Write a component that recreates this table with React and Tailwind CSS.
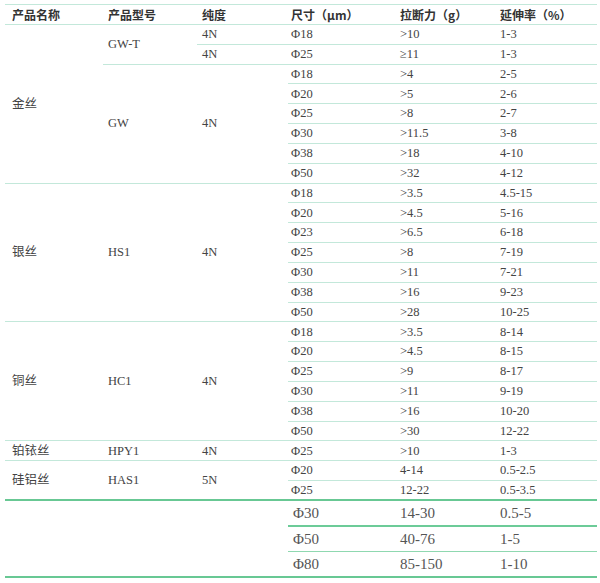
import React from 'react';

const serif = { fontFamily: '"Liberation Serif", "Noto Sans CJK SC", serif' };

const sections = [
  {
    name: '金丝',
    groups: [
      { model: 'GW-T', rows: [['4N', 'Φ18', '>10', '1-3'], ['4N', 'Φ25', '≥11', '1-3']], perRowPurity: true },
      {
        model: 'GW',
        purity: '4N',
        rows: [
          ['Φ18', '>4', '2-5'],
          ['Φ20', '>5', '2-6'],
          ['Φ25', '>8', '2-7'],
          ['Φ30', '>11.5', '3-8'],
          ['Φ38', '>18', '4-10'],
          ['Φ50', '>32', '4-12'],
        ],
      },
    ],
  },
  {
    name: '银丝',
    groups: [
      {
        model: 'HS1',
        purity: '4N',
        rows: [
          ['Φ18', '>3.5', '4.5-15'],
          ['Φ20', '>4.5', '5-16'],
          ['Φ23', '>6.5', '6-18'],
          ['Φ25', '>8', '7-19'],
          ['Φ30', '>11', '7-21'],
          ['Φ38', '>16', '9-23'],
          ['Φ50', '>28', '10-25'],
        ],
      },
    ],
  },
  {
    name: '铜丝',
    groups: [
      {
        model: 'HC1',
        purity: '4N',
        rows: [
          ['Φ18', '>3.5', '8-14'],
          ['Φ20', '>4.5', '8-15'],
          ['Φ25', '>9', '8-17'],
          ['Φ30', '>11', '9-19'],
          ['Φ38', '>16', '10-20'],
          ['Φ50', '>30', '12-22'],
        ],
      },
    ],
  },
  {
    name: '铂铱丝',
    groups: [{ model: 'HPY1', purity: '4N', rows: [['Φ25', '>10', '1-3']] }],
  },
  {
    name: '硅铝丝',
    groups: [
      {
        model: 'HAS1',
        purity: '5N',
        rows: [
          ['Φ20', '4-14', '0.5-2.5'],
          ['Φ25', '12-22', '0.5-3.5'],
        ],
      },
    ],
    last: true,
  },
];

const extra = [
  ['Φ30', '14-30', '0.5-5'],
  ['Φ50', '40-76', '1-5'],
  ['Φ80', '85-150', '1-10'],
];

const cell = 'align-middle pl-[6px] border-b border-[#c3e8da] whitespace-nowrap';

export default function App() {
  const body = [];
  sections.forEach((sec) => {
    const total = sec.groups.reduce((n, g) => n + g.rows.length, 0);
    const secBorder = sec.last ? 'border-b-2 border-[#68c894]' : 'border-b border-[#c3e8da]';
    let first = true;
    sec.groups.forEach((g, gi) => {
      const lastGroup = gi === sec.groups.length - 1;
      g.rows.forEach((r, ri) => {
        const lastRow = lastGroup && ri === g.rows.length - 1;
        const rowBorder = lastRow ? secBorder : 'border-b border-[#c3e8da]';
        const vals = g.perRowPurity ? r.slice(1) : r;
        body.push(
          <tr key={`${sec.name}-${gi}-${ri}`} className="h-[19.84px]">
            {first && (
              <td rowSpan={total} className={`align-middle pl-[7px] whitespace-nowrap ${secBorder}`}>
                {sec.name}
              </td>
            )}
            {ri === 0 && (
              <td rowSpan={g.rows.length} className={`align-middle pl-[5px] whitespace-nowrap ${lastGroup ? secBorder : 'border-b border-[#c3e8da]'}`}>
                {g.model}
              </td>
            )}
            {g.perRowPurity ? (
              <td className={`align-middle pl-[5px] ${rowBorder}`}>{r[0]}</td>
            ) : (
              ri === 0 && (
                <td rowSpan={g.rows.length} className={`align-middle pl-[5px] ${lastGroup ? secBorder : 'border-b border-[#c3e8da]'}`}>
                  {g.purity}
                </td>
              )
            )}
            <td className={`align-middle pl-[3px] ${rowBorder}`}>{vals[0]}</td>
            <td className={`align-middle pl-[5px] ${rowBorder}`}>{vals[1]}</td>
            <td className={`align-middle pl-[5px] ${rowBorder}`}>{vals[2]}</td>
          </tr>
        );
        first = false;
      });
    });
  });

  return (
    <div className="w-[600px] h-[583px] bg-white pt-[4px] pl-[5px]" style={serif}>
      <table className="w-[592px] border-collapse table-fixed text-[12.5px] text-[#444] leading-none">
        <colgroup>
          <col className="w-[98px]" />
          <col className="w-[94px]" />
          <col className="w-[91px]" />
          <col className="w-[107px]" />
          <col className="w-[100px]" />
          <col className="w-[102px]" />
        </colgroup>
        <thead>
          <tr className="h-[20px] border-t border-[#c3e8da] border-b border-[#b6e2d0] text-left font-bold text-[#333] text-[12px]" style={{ fontFamily: '"Noto Sans CJK SC", "Liberation Serif", sans-serif' }}>
            <th className="pl-[7px] font-bold">产品名称</th>
            <th className="pl-[5px] font-bold">产品型号</th>
            <th className="pl-[5px] font-bold">纯度</th>
            <th className="pl-[3px] font-bold">尺寸（μm）</th>
            <th className="pl-[5px] font-bold">拉断力（g）</th>
            <th className="pl-[5px] font-bold">延伸率（%）</th>
          </tr>
        </thead>
        <tbody>
          {body}
          {extra.map((r, i) => {
            const b = i === extra.length - 1 ? 'border-b-2 border-[#68c894]' : i === 0 ? 'border-b-2 border-[#6ccb98]' : 'border-b border-[#8fd8b0]';
            return (
              <tr key={`x${i}`} className="h-[25.6px] text-[15px] text-[#555]">
                {i === 0 && <td colSpan={3} rowSpan={3} className="border-b-2 border-[#68c894]" />}
                <td className={`align-middle pl-[5px] ${b}`}>{r[0]}</td>
                <td className={`align-middle pl-[5px] ${b}`}>{r[1]}</td>
                <td className={`align-middle pl-[5px] ${b}`}>{r[2]}</td>
              </tr>
            );
          })}
        </tbody>
      </table>
    </div>
  );
}
